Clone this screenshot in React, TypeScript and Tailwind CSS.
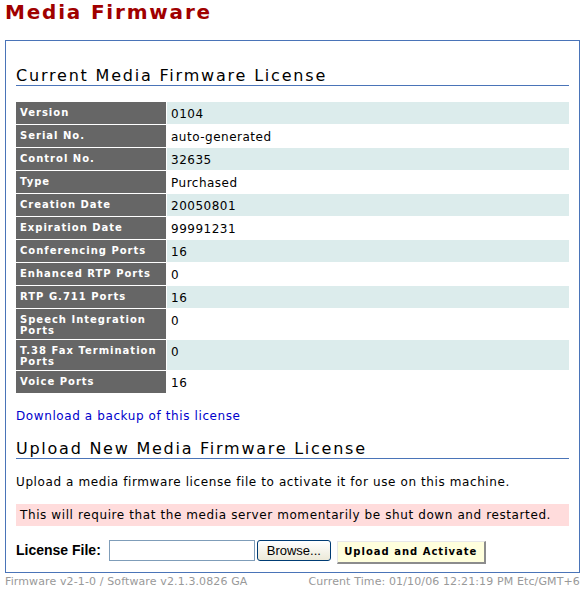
import React from "react";

const rows: { label: string; value: string; tall?: boolean }[] = [
  { label: "Version", value: "0104" },
  { label: "Serial No.", value: "auto-generated" },
  { label: "Control No.", value: "32635" },
  { label: "Type", value: "Purchased" },
  { label: "Creation Date", value: "20050801" },
  { label: "Expiration Date", value: "99991231" },
  { label: "Conferencing Ports", value: "16" },
  { label: "Enhanced RTP Ports", value: "0" },
  { label: "RTP G.711 Ports", value: "16" },
  { label: "Speech Integration Ports", value: "0", tall: true },
  { label: "T.38 Fax Termination Ports", value: "0", tall: true },
  { label: "Voice Ports", value: "16" },
];

export default function App() {
  return (
    <div className="w-[585px] h-[591px] bg-white text-black font-['DejaVu_Sans',Verdana,sans-serif] overflow-hidden">
      <h1 className="pl-[5px] h-[24px] text-[20px] leading-[24px] font-bold tracking-[1.8px] text-[#a00000]">
        Media Firmware
      </h1>
      <div className="mx-[5px] mt-[16px] border border-[#4a74b8] px-[10px] pt-[25px] pb-[8px]">
        <h2 className="text-[16px] leading-[19px] tracking-[1.8px] border-b border-[#4a74b8]">
          Current Media Firmware License
        </h2>
        <div className="mt-[16px] grid grid-cols-[151px_1fr] gap-y-px">
          {rows.map((r, i) => (
            <React.Fragment key={r.label}>
              <div className="bg-[#666666] text-white font-bold text-[10px] leading-[11px] tracking-[1px] pl-[4px] pr-[2px] pt-[5px] pb-[3px] border-r border-white">
                {r.label}
              </div>
              <div
                className={
                  (i % 2 === 0 ? "bg-[#dcecec] " : "bg-white ") +
                  "text-[12px] leading-[15px] tracking-[0.5px] pl-[4px] pt-[5px] pb-[2px]"
                }
              >
                {r.value}
              </div>
            </React.Fragment>
          ))}
        </div>
        <a href="#" className="block mt-[16px] text-[12px] leading-[15px] tracking-[0.6px] text-[#0000cc]">
          Download a backup of this license
        </a>
        <h2 className="mt-[15px] text-[16px] leading-[19px] tracking-[1.75px] border-b border-[#4a74b8]">
          Upload New Media Firmware License
        </h2>
        <p className="mt-[16px] text-[12px] leading-[15px] tracking-[0.6px]">
          Upload a media firmware license file to activate it for use on this machine.
        </p>
        <div className="mt-[14px] bg-[#ffdcdc] text-[12px] leading-[15px] tracking-[0.6px] pl-[4px] pt-[4px] pb-[3px]">
          This will require that the media server momentarily be shut down and restarted.
        </div>
        <div className="mt-[14px] flex items-start h-[24px]">
          <span className="font-['Liberation_Sans',Arial,sans-serif] font-bold text-[14px] leading-[21px] mr-[8px]">
            License File:
          </span>
          <div className="w-[146px] h-[21px] border border-[#7f9db9] bg-white"></div>
          <button className="ml-[2px] w-[74px] h-[21px] rounded-[3px] border border-[#003c74] bg-gradient-to-b from-white to-[#ece9d8] font-['Liberation_Sans',Arial,sans-serif] text-[13px] leading-[19px] text-black">
            Browse...
          </button>
          <button className="ml-[6px] mt-[1px] w-[149px] h-[23px] bg-[#ffffdd] border-t border-l border-[#e8e8e8] border-r-2 border-b-2 border-r-[#8c8c8c] border-b-[#8c8c8c] font-bold text-[10px] leading-[20px] tracking-[1px] text-black">
            Upload and Activate
          </button>
        </div>
      </div>
      <div className="flex justify-between px-[5px] mt-[2px] text-[11px] leading-[14px] tracking-[0.12px] text-[#999999]">
        <span>Firmware v2-1-0 / Software v2.1.3.0826 GA</span>
        <span>Current Time: 01/10/06 12:21:19 PM Etc/GMT+6</span>
      </div>
    </div>
  );
}
